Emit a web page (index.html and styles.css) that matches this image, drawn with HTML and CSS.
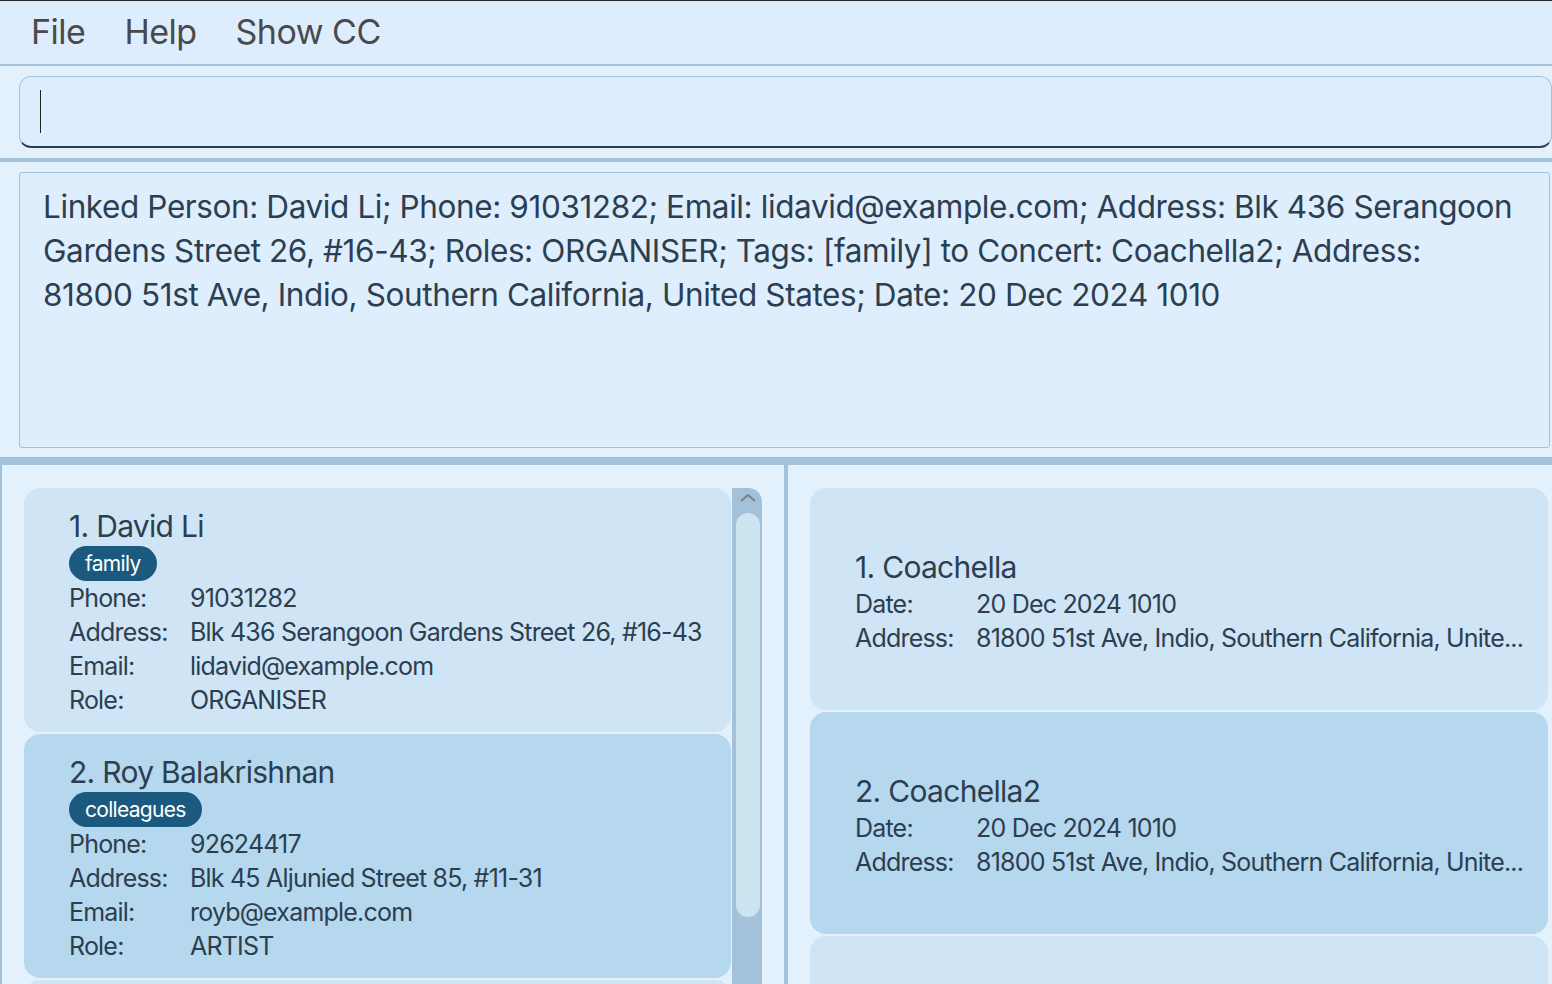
FILE: index.html
```html
<!DOCTYPE html>
<html>
<head>
<meta charset="utf-8">
<link rel="stylesheet" href="styles.css">
</head>
<body>
<div class="app">
  <div class="menubar">
    <span class="menu-item">File</span>
    <span class="menu-item">Help</span>
    <span class="menu-item">Show CC</span>
  </div>
  <div class="command">
    <div class="command-input"><span class="caret"></span></div>
  </div>
  <div class="result">
    <div class="result-box">Linked Person: David Li; Phone: 91031282; Email: lidavid@example.com; Address: Blk 436 Serangoon<br>Gardens Street 26, #16-43; Roles: ORGANISER; Tags: [family] to Concert: Coachella2; Address:<br>81800 51st Ave, Indio, Southern California, United States; Date: 20 Dec 2024 1010</div>
  </div>
  <div class="panes">
    <div class="pane pane-left">
      <div class="list">
        <div class="card card-light">
          <div class="name">1. David Li</div>
          <div class="tags"><span class="tag">family</span></div>
          <div class="row"><span class="label">Phone:</span><span class="value">91031282</span></div>
          <div class="row"><span class="label">Address:</span><span class="value">Blk 436 Serangoon Gardens Street 26, #16-43</span></div>
          <div class="row"><span class="label">Email:</span><span class="value">lidavid@example.com</span></div>
          <div class="row"><span class="label">Role:</span><span class="value">ORGANISER</span></div>
        </div>
        <div class="card card-dark">
          <div class="name">2. Roy Balakrishnan</div>
          <div class="tags"><span class="tag">colleagues</span></div>
          <div class="row"><span class="label">Phone:</span><span class="value">92624417</span></div>
          <div class="row"><span class="label">Address:</span><span class="value">Blk 45 Aljunied Street 85, #11-31</span></div>
          <div class="row"><span class="label">Email:</span><span class="value">royb@example.com</span></div>
          <div class="row"><span class="label">Role:</span><span class="value">ARTIST</span></div>
        </div>
        <div class="card card-light"></div>
      </div>
      <div class="scrollbar">
        <div class="scroll-arrow">
          <svg width="18" height="10" viewBox="0 0 18 10"><path d="M2 8 L9 2 L16 8" fill="none" stroke="#7d7f83" stroke-width="2"/></svg>
        </div>
        <div class="thumb"></div>
      </div>
    </div>
    <div class="splitter"></div>
    <div class="pane pane-right">
      <div class="concert card-light">
        <div class="name">1. Coachella</div>
        <div class="row"><span class="label">Date:</span><span class="value">20 Dec 2024 1010</span></div>
        <div class="row"><span class="label">Address:</span><span class="value">81800 51st Ave, Indio, Southern California, Unite...</span></div>
      </div>
      <div class="concert card-dark">
        <div class="name">2. Coachella2</div>
        <div class="row"><span class="label">Date:</span><span class="value">20 Dec 2024 1010</span></div>
        <div class="row"><span class="label">Address:</span><span class="value">81800 51st Ave, Indio, Southern California, Unite...</span></div>
      </div>
      <div class="concert card-light"></div>
    </div>
  </div>
</div>
</body>
</html>
```

FILE: styles.css
```css
* { box-sizing: border-box; }
html, body {
  margin: 0;
  padding: 0;
  width: 1552px;
  height: 984px;
  overflow: hidden;
  background: #e3f1fc;
  font-family: Inter, "Noto Sans", sans-serif;
  color: #2c3e50;
}
.app {
  display: flex;
  flex-direction: column;
  height: 984px;
  border-top: 1px solid #23272b;
}
.menubar {
  height: 65px;
  flex-shrink: 0;
  background: #ddedfd;
  border-bottom: 2px solid #a3c1d8;
  display: flex;
  align-items: center;
  gap: 39px;
  padding-left: 31px;
  padding-bottom: 2px;
}
.menu-item {
  font-size: 34px;
  color: #4a4a4a;
  letter-spacing: -0.5px;
}
.command {
  height: 96px;
  flex-shrink: 0;
  padding: 10px 0 0 19px;
  border-bottom: 4px solid #a3c1d8;
}
.command-input {
  width: 1533px;
  height: 72px;
  background: #ddedfd;
  border: 1px solid #a3c1d8;
  border-bottom: 2px solid #2c3e50;
  border-radius: 12px;
  padding: 13px 0 0 20px;
}
.caret {
  display: block;
  width: 1px;
  height: 43px;
  background: #222;
}
.result {
  height: 303px;
  flex-shrink: 0;
  padding: 10px 0 0 19px;
  border-bottom: 8px solid #a3c1d8;
}
.result-box {
  width: 1531px;
  height: 276px;
  background: #deeefd;
  border: 1px solid #a3c1d8;
  border-radius: 3px;
  padding: 12px 10px 0 23px;
  font-size: 31.5px;
  line-height: 44px;
  letter-spacing: -0.4px;
  white-space: nowrap;
  overflow: hidden;
}
.panes {
  flex: 1;
  display: flex;
  overflow: hidden;
}
.pane-left {
  width: 784px;
  flex-shrink: 0;
  border-left: 2px solid #a3c1d8;
  display: flex;
  padding: 23px 22px 0 22px;
  gap: 1px;
}
.splitter {
  width: 4px;
  flex-shrink: 0;
  background: #a3c1d8;
}
.pane-right {
  flex: 1;
  min-width: 0;
  padding: 23px 4px 0 22px;
  display: flex;
  flex-direction: column;
  gap: 2px;
}
.list {
  width: 707px;
  flex-shrink: 0;
  display: flex;
  flex-direction: column;
  gap: 2px;
}
.card {
  border-radius: 16px;
  padding: 18px 20px 15px 45px;
  height: 244px;
  flex-shrink: 0;
  overflow: hidden;
}
.card-light { background: #cfe5f5; }
.card-dark { background: #b5d8ee; }
.name {
  font-size: 30px;
  line-height: 40px;
  letter-spacing: -0.7px;
  white-space: nowrap;
}
.tags {
  display: flex;
  height: 35px;
}
.tag {
  background: #1b5a7e;
  color: #fff;
  font-size: 21px;
  border-radius: 18px;
  height: 35px;
  line-height: 35px;
  padding: 0 16px;
  letter-spacing: -0.7px;
}
.row {
  display: flex;
  font-size: 25px;
  line-height: 34px;
  letter-spacing: -0.8px;
  white-space: nowrap;
}
.label { width: 121px; flex-shrink: 0; }
.scrollbar {
  width: 30px;
  flex-shrink: 0;
  background: #a3c1d8;
  border-top-right-radius: 14px;
  padding: 0 2px 0 4px;
  display: flex;
  flex-direction: column;
  align-items: center;
}
.scroll-arrow {
  height: 25px;
  display: flex;
  align-items: center;
  justify-content: center;
  padding-bottom: 5px;
}
.thumb {
  width: 24px;
  height: 404px;
  background: #cce3f0;
  border-radius: 12px;
}
.concert {
  height: 222px;
  flex-shrink: 0;
  border-radius: 16px;
  padding: 59px 20px 0 45px;
  overflow: hidden;
}
```
